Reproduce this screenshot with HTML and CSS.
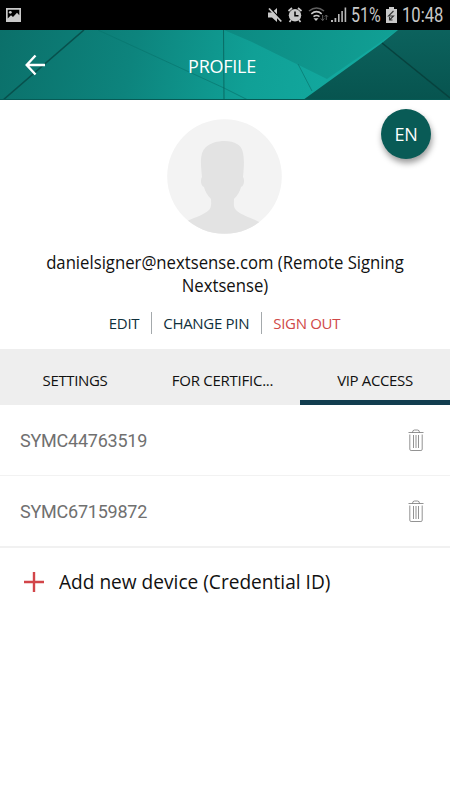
FILE: index.html
```html
<!DOCTYPE html>
<html lang="en">
<head>
<meta charset="utf-8">
<title>Profile</title>
<link rel="stylesheet" href="styles.css">
</head>
<body>
<div class="statusbar">
  <svg class="picture" width="15" height="14" viewBox="0 0 15 14"><path fill="#c9c9c9" fill-rule="evenodd" d="M0 0h15v14H0zM1.700 1.700v8.800l3.300-3.200 2 1.700 4-4.200 2.300 2.400V1.700z"/><circle cx="4.300" cy="4.300" r="1.400" fill="#c9c9c9"/></svg>
  <div class="indicators">
    <svg width="112" height="30" viewBox="267 0 112 30" class="signals">
      <g fill="#c9c9c9">
        <path d="M268 12.500h4l5-4.500v14l-5-4.500h-4z"/>
        <path d="M269.500 7.500l12.500 13" stroke="#000" stroke-width="1.500"/>
        <path d="M269 8.500l12.300 13" stroke="#c9c9c9" stroke-width="1.800"/>
        <circle cx="295" cy="15.300" r="6.200"/>
        <path d="M288.500 11l3.500-3M301.500 11l-3.500-3M291 20l-1.500 2M299 20l1.500 2" stroke="#c9c9c9" stroke-width="1.700"/>
        <path d="M295 11.500v4.300h3.500" fill="none" stroke="#000" stroke-width="1.500"/>
      </g>
      <g fill="none" stroke="#c9c9c9" stroke-width="1.600">
        <path d="M309 11q7.500-6 15 0" stroke="#606060"/>
        <path d="M311.300 13.800q5.200-4.200 10.400 0M313.500 16.700q3-2.400 6 0"/>
        <path d="M322.700 15v5.500m-1.900-2 1.900 2 1.700-2M326.300 20v-5m-1.600 1.700 1.600-1.700 1.600 1.700" stroke="#606060" stroke-width="1"/>
      </g>
      <path d="M313.500 18.300h5l-2.500 2.700z" fill="#c9c9c9"/>
      <path d="M331 22v-2h2v2zM334.500 22v-4h1.800v4zM338 22v-8h1.600v8zM341.300 22V11h1.600v11zM344.600 22V7.500h1.600V22z" fill="#b8b8b8"/>
    </svg>
    <span class="percent">51%</span>
    <svg class="battery" width="11" height="16" viewBox="0 0 11 16"><path d="M3 0h5v2h3v14H0V2h3z" fill="#c9c9c9"/><path d="M7.500 4 2.500 9h5l-4 4M3.500 10v3h3" fill="none" stroke="#333" stroke-width="1.100"/></svg>
    <span class="time">10:48</span>
  </div>
</div>
<header class="header">
  <svg class="facets" width="450" height="70" viewBox="0 0 450 70">
    <defs>
      <linearGradient id="teal" x1="0" y1="0" x2="330" y2="70" gradientUnits="userSpaceOnUse"><stop offset="0" stop-color="#0b706a"/><stop offset=".4" stop-color="#0d847d"/><stop offset=".75" stop-color="#10a096"/><stop offset="1" stop-color="#12a89e"/></linearGradient>
      <linearGradient id="upper" x1="230" y1="0" x2="390" y2="30" gradientUnits="userSpaceOnUse"><stop offset="0" stop-color="#0c8a82"/><stop offset="1" stop-color="#11a095"/></linearGradient>
      <linearGradient id="dark" x1="0" y1="0" x2="0" y2="1"><stop offset="0" stop-color="#0c625d"/><stop offset="1" stop-color="#07544f"/></linearGradient>
    </defs>
    <path d="M0 0h450v70H0z" fill="url(#teal)"/>
    <path d="M224 0h174L327 49 252 12z" fill="url(#upper)"/>
    <path d="M398 0h52v70H303l79-57z" fill="url(#dark)"/>
    <path d="M382 13l68 55" stroke="#07423e" stroke-width="1.500"/>
    <path d="M84 0 3 70" stroke="#07514d" stroke-width="1.600"/>
    <path d="M98 0 224 58 248 70M298 34l14 27" fill="none" stroke="#08756e" stroke-width=".7"/>
    <path d="M223.500 0l.5 70" stroke="#075f59" stroke-width=".8"/>
    <path d="M0 69.500h450" stroke="#075b56"/>
  </svg>
  <svg class="back" width="22" height="22" viewBox="0 0 22 22"><path d="M20 11H2M10.500 1.500 1.700 11l8.800 9.500" fill="none" stroke="#fff" stroke-width="2.400"/></svg>
  <h1 class="title">PROFILE</h1>
</header>
<main>
  <section class="profile">
    <button class="language">EN</button>
    <svg class="avatar" width="115" height="115" viewBox="0 0 115 115"><defs><clipPath id="round"><circle cx="57.500" cy="57.500" r="57.300"/></clipPath></defs><g clip-path="url(#round)"><path d="M0 0h115v115H0z" fill="#f3f3f3"/><path d="M17 104c7-5 19-7 25-13 3-3 2-8 2-11-4-4-6-8-7-12-3-1-4-7-2-10-1-11-3-24 4-30 7-7 24-8 31-3 9 4 7 22 6 33 2 3 1 9-2 10-1 4-3 8-7 12 0 4-1 8 2 11 6 6 17 8 25 13v11H17z" fill="#e3e3e3"/></g></svg>
    <p class="name">danielsigner@nextsense.com (Remote Signing<br>Nextsense)</p>
    <nav class="actions"><a class="edit">EDIT</a><a class="pin">CHANGE PIN</a><a class="out">SIGN OUT</a></nav>
  </section>
  <nav class="tabs"><a class="tab">SETTINGS</a><a class="tab certificates">FOR CERTIFIC...</a><a class="tab active">VIP ACCESS</a></nav>
  <ul class="devices">
    <li class="device"><span>SYMC44763519</span><svg class="trash" width="16" height="23" viewBox="0 0 16 23"><path d="M.5 3.500h15M4.500 3.500q0-2.500 2-2.500h3q2 0 2 2.500M1.800 5.500v14.700q0 1.300 1.300 1.300h9.800q1.300 0 1.300-1.300V5.500M5.500 6v13M8 6v13M10.500 6v13"/></svg></li>
    <li class="device"><span>SYMC67159872</span><svg class="trash" width="16" height="23" viewBox="0 0 16 23"><path d="M.5 3.500h15M4.500 3.500q0-2.500 2-2.500h3q2 0 2 2.500M1.800 5.500v14.700q0 1.300 1.300 1.300h9.800q1.300 0 1.300-1.300V5.500M5.500 6v13M8 6v13M10.500 6v13"/></svg></li>
  </ul>
  <div class="add"><svg width="20" height="20" viewBox="0 0 20 20"><path d="M10 0v20M0 10h20" stroke="#d24549" stroke-width="2.400"/></svg><span>Add new device (Credential ID)</span></div>
</main>
</body>
</html>
```

FILE: styles.css
```css
* { box-sizing: border-box; }
body { margin: 0; width: 450px; height: 800px; background: #fff; font-family: "Open Sans", "Noto Sans", sans-serif; color: #111; overflow: hidden; }
.statusbar { height: 30px; background: #000; display: flex; justify-content: space-between; align-items: center; padding: 0 8px 0 6px; color: #c9c9c9; font: 20px/30px Roboto, sans-serif; }
.indicators { display: flex; align-items: center; height: 30px; }
.signals { width: 112px; margin-right: -28px; }
.percent, .time { display: block; white-space: nowrap; transform-origin: left; }
.percent { width: 29px; margin-right: 6px; transform: scaleX(.8); }
.time { width: 40px; margin-left: 5px; transform: scaleX(.83); }
.battery, .signals, .percent, .time { flex-shrink: 0; }
.header { height: 70px; display: grid; align-items: center; }
.facets, .back, .title { grid-area: 1 / 1; }
.back { margin: 0 0 0 25px; }
.title { margin: 0; padding: 2px 6px 0 0; text-align: center; color: #fff; font-size: 18px; font-weight: 400; line-height: 24px; letter-spacing: -.25px; }
.profile { height: 249px; position: relative; padding-top: 19px; }
.language { position: absolute; top: 9px; right: 19px; width: 50px; height: 50px; padding: 0; border: 0; border-radius: 50%; background: #095b56; color: #fff; font: 18px/50px "Open Sans", sans-serif; letter-spacing: -.4px; box-shadow: 1px 4px 6px rgba(0,0,0,.4); }
.avatar { display: block; margin: 0 0 0 167px; }
.name { margin: 17px 0 0; text-align: center; font-size: 18px; line-height: 23px; transform: scaleX(.928); }
.actions { display: flex; justify-content: center; margin: 15px 0 0 -1px; font-size: 15px; line-height: 22px; color: #10303c; letter-spacing: -.3px; }
.actions a { padding: 0 11.5px; white-space: nowrap; }
.actions a + a { border-left: 1px solid #a4a9ac; }
.actions .out { color: #d04848; }
.tabs { height: 56px; display: grid; grid-template-columns: repeat(3, 1fr); background: #eee; font-size: 15px; line-height: 20px; text-align: center; letter-spacing: -.35px; }
.tab { padding-top: 21px; }
.certificates { padding-right: 5px; letter-spacing: -.25px; }
.active { border-bottom: 5px solid #123d4f; }
.devices { list-style: none; margin: 0; padding: 0; }
.device { height: 71px; display: flex; align-items: center; justify-content: space-between; padding: 2px 26px 0 20px; border-bottom: 1px solid #f2f2f2; font: 18px/24px Roboto, sans-serif; letter-spacing: -.23px; color: #707070; }
.device:last-child { height: 72px; border-bottom: 2px solid #f1f1f1; }
.trash { margin-bottom: 2px; }
.trash path { fill: none; stroke: #777; stroke-width: .8; }
.add { height: 68px; display: flex; align-items: center; gap: 15px; padding-left: 24px; font-size: 20px; line-height: 28px; }
.add span { transform: scaleX(.955); transform-origin: left; }
```
